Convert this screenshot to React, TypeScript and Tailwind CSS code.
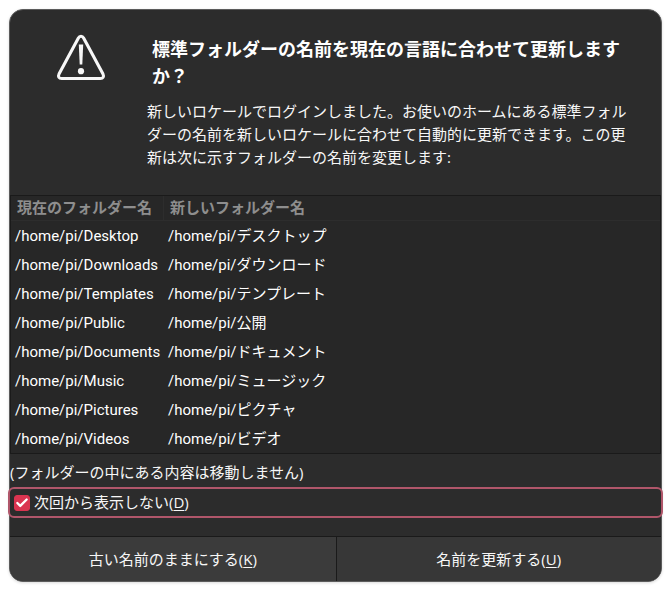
import { useState } from 'react';
import { Check } from 'lucide-react';

const folders = [
  { current: '/home/pi/Desktop', next: '/home/pi/デスクトップ' },
  { current: '/home/pi/Downloads', next: '/home/pi/ダウンロード' },
  { current: '/home/pi/Templates', next: '/home/pi/テンプレート' },
  { current: '/home/pi/Public', next: '/home/pi/公開' },
  { current: '/home/pi/Documents', next: '/home/pi/ドキュメント' },
  { current: '/home/pi/Music', next: '/home/pi/ミュージック' },
  { current: '/home/pi/Pictures', next: '/home/pi/ピクチャ' },
  { current: '/home/pi/Videos', next: '/home/pi/ビデオ' },
];

export default function App() {
  const [dontAskAgain, setDontAskAgain] = useState(true);

  return (
    <div lang="ja" className="min-h-screen bg-white p-[9px] font-['Open_Sans','Noto_Sans_CJK_JP',sans-serif] text-[15px] leading-[23px] text-[#f7f7f7]">
      <main
        role="dialog"
        aria-labelledby="dialog-title"
        className="flex flex-col rounded-[14px] border border-[#5c5c5c] bg-[#2c2c2c] shadow-[0_1px_3px_rgba(0,0,0,0.15)]"
      >
        <header className="flex pt-[26px] pr-[31px] pb-[26px] pl-[46px]">
          <WarningIcon />
          <div className="ml-[41px] min-w-0 flex-1">
            <h1 id="dialog-title" className="pl-[5px] text-[18px] leading-[27px] font-bold text-white">
              標準フォルダーの名前を現在の言語に合わせて更新しますか？
            </h1>
            <p className="mt-[10px]">
              新しいロケールでログインしました。お使いのホームにある標準フォルダーの名前を新しいロケールに合わせて自動的に更新できます。この更新は次に示すフォルダーの名前を変更します:
            </p>
          </div>
        </header>

        <div className="border border-[#1a1a1a] bg-[#272727]">
          <table className="w-full table-fixed border-separate border-spacing-0 text-left font-[Roboto,'Noto_Sans_CJK_JP',sans-serif]">
            <thead>
              <tr className="h-[25px] text-[#8e8e8e]">
                <th className="w-[153px] border-r border-b border-[#2d2d2d] p-0 pt-px pl-[6px] font-bold">現在のフォルダー名</th>
                <th className="border-b border-[#2d2d2d] p-0 pt-px pl-[6px] font-bold">新しいフォルダー名</th>
              </tr>
            </thead>
            <tbody>
              {folders.map((folder) => (
                <tr key={folder.current} className="h-[29px] whitespace-nowrap text-white">
                  <td className="p-0 pt-[2px] pl-1">{folder.current}</td>
                  <td className="p-0 pt-[2px] pl-1">{folder.next}</td>
                </tr>
              ))}
            </tbody>
          </table>
        </div>

        <p className="pt-[7px] pb-[3px]">(フォルダーの中にある内容は移動しません)</p>

        <label className="-mx-[2px] flex h-[31px] items-center gap-1 rounded-[6px] border-2 border-[#b0566a] pl-1">
          <span className="grid size-4 shrink-0">
            <input
              type="checkbox"
              checked={dontAskAgain}
              onChange={(e) => setDontAskAgain(e.target.checked)}
              className="peer col-start-1 row-start-1 size-4 appearance-none rounded-[3px] border border-[#8e8e8e] checked:border-[#da3450] checked:bg-[#da3450] focus:outline-none"
            />
            <Check
              size={14}
              strokeWidth={4}
              className="pointer-events-none invisible col-start-1 row-start-1 place-self-center text-white peer-checked:visible"
            />
          </span>
          <span>
            次回から表示しない(<u className="underline-offset-2">D</u>)
          </span>
        </label>

        <footer className="mt-[18px] grid grid-cols-2 overflow-hidden rounded-b-[13px] border-t border-[#1a1a1a]">
          <button type="button" className="h-11 bg-[#3b3b3b] hover:bg-[#414141]">
            古い名前のままにする(<u className="underline-offset-2">K</u>)
          </button>
          <button type="button" className="h-11 border-l border-[#1a1a1a] bg-[#373737] hover:bg-[#3d3d3d]">
            名前を更新する(<u className="underline-offset-2">U</u>)
          </button>
        </footer>
      </main>
    </div>
  );
}

function WarningIcon() {
  return (
    <svg width="50" height="46" viewBox="0 0 50 46" fill="none" className="shrink-0 overflow-visible" aria-hidden="true">
      <path
        d="M22.4 2 C23.6 -0.3 26.4 -0.3 27.6 2 L47 38.1 C48.3 40.7 47 42.5 44.4 42.5 H5.6 C3 42.5 1.7 40.7 3 38.1 Z"
        stroke="#f7f7f7"
        strokeWidth="3.1"
        strokeLinejoin="round"
      />
      <path d="M22.8 8.5 H27.2 L26.3 28.5 H23.7 Z" fill="#f7f7f7" />
      <circle cx="25" cy="35.2" r="3.1" fill="#f7f7f7" />
    </svg>
  );
}
